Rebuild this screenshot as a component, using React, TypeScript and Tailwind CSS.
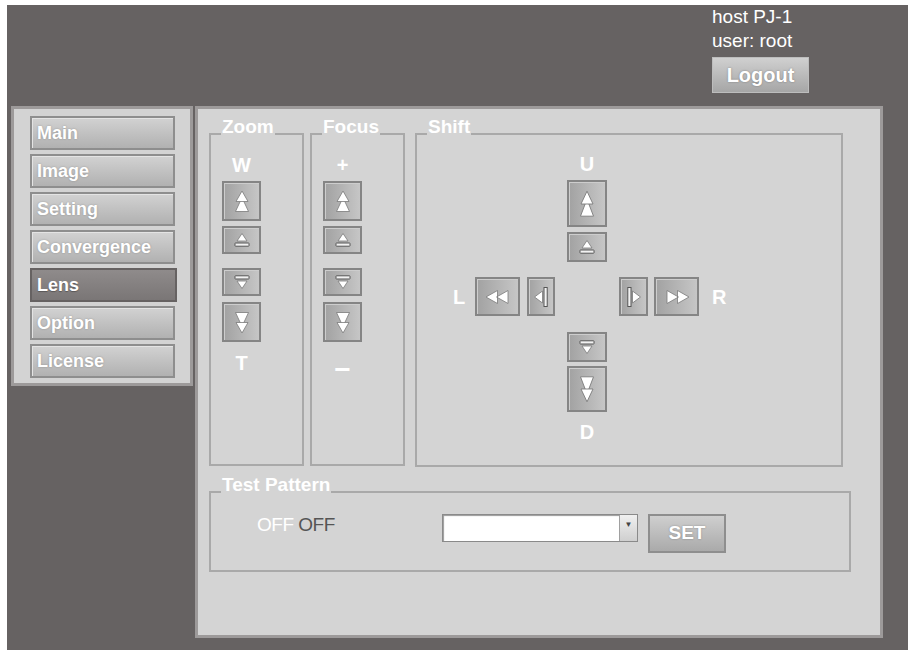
import React from "react";

const EDGE = "#7a7a7a";

function DoubleUp({ tall = false }: { tall?: boolean }) {
  return (
    <svg width="16" height={tall ? 28 : 23} viewBox="0 0 16 23" preserveAspectRatio="none">
      <path d="M8 7.5 L14.5 21.5 L1.5 21.5 Z" fill="#fff" stroke={EDGE} strokeWidth="0.8" strokeLinejoin="round" />
      <path d="M8 1 L14 11.5 L2 11.5 Z" fill="#fff" stroke={EDGE} strokeWidth="0.8" strokeLinejoin="round" />
    </svg>
  );
}

function BarUp() {
  return (
    <svg width="18" height="16" viewBox="0 0 18 16">
      <path d="M9 1.5 L14 9 L4 9 Z" fill="#fff" stroke={EDGE} strokeWidth="0.8" strokeLinejoin="round" />
      <rect x="2" y="11" width="14" height="3.2" rx="0.5" fill="#f2f2f2" stroke="#555" strokeWidth="1" />
    </svg>
  );
}

function Flip({ children }: { children: React.ReactNode }) {
  return <span className="flex rotate-180">{children}</span>;
}

function Rewind() {
  return (
    <svg width="26" height="16" viewBox="0 0 26 16">
      <path d="M1 8 L12.5 1.5 L12.5 14.5 Z M11.5 8 L23 1.5 L23 14.5 Z" fill="#fff" stroke={EDGE} strokeWidth="0.8" strokeLinejoin="round" />
    </svg>
  );
}

function StepLeft() {
  return (
    <svg width="16" height="22" viewBox="0 0 16 22">
      <path d="M1.5 11 L9.5 5 L9.5 17 Z" fill="#fff" stroke={EDGE} strokeWidth="0.8" strokeLinejoin="round" />
      <rect x="11" y="1.5" width="3.2" height="19" fill="#f2f2f2" stroke="#555" strokeWidth="1" />
    </svg>
  );
}

function ArrowBtn({ className, children }: { className: string; children: React.ReactNode }) {
  return (
    <button
      type="button"
      className={
        "flex items-center justify-center border-2 border-[#858585] bg-linear-to-r from-[#a2a2a2] to-[#c6c6c6] shadow-[inset_1px_1px_0_#cdcdcd] " +
        className
      }
    >
      {children}
    </button>
  );
}

function Group({ title, className, children }: { title: string; className: string; children?: React.ReactNode }) {
  return (
    <div className={"relative border-2 border-[#a9a9a9] " + className}>
      <span className="absolute -top-[18px] left-[10px] px-[1px] bg-[#d4d4d4] text-white font-bold text-[19px] leading-[20px]">
        {title}
      </span>
      {children}
    </div>
  );
}

const letter = "text-white font-bold text-[20px] leading-[20px]";

function LensColumn({ top, bottom }: { top: string; bottom: string }) {
  return (
    <div className="pl-[11px] pt-[20px]">
      <div className="w-[39px] flex flex-col items-center">
        <div className={letter}>{top}</div>
        <ArrowBtn className="mt-[6px] w-[39px] h-[40px]">
          <DoubleUp />
        </ArrowBtn>
        <ArrowBtn className="mt-[5px] w-[39px] h-[28px]">
          <BarUp />
        </ArrowBtn>
        <ArrowBtn className="mt-[14px] w-[39px] h-[28px]">
          <Flip>
            <BarUp />
          </Flip>
        </ArrowBtn>
        <ArrowBtn className="mt-[6px] w-[39px] h-[40px]">
          <Flip>
            <DoubleUp />
          </Flip>
        </ArrowBtn>
        {bottom === "−" ? (
          <div className="mt-[18px] text-[28px] leading-[20px] text-white font-bold">−</div>
        ) : (
          <div className={"mt-[11px] " + letter}>{bottom}</div>
        )}
      </div>
    </div>
  );
}

function ShiftCross() {
  return (
    <div className="pl-[36px] pt-[19px]">
      <div className="ml-[114px] w-[40px] flex flex-col items-center">
        <div className={letter}>U</div>
        <ArrowBtn className="mt-[6px] w-[40px] h-[47px]">
          <DoubleUp tall />
        </ArrowBtn>
        <ArrowBtn className="mt-[5px] w-[40px] h-[30px]">
          <BarUp />
        </ArrowBtn>
      </div>
      <div className="mt-[15px] flex items-center h-[39px]">
        <div className={"w-[14px] " + letter}>L</div>
        <ArrowBtn className="ml-[8px] w-[45px] h-[39px]">
          <Rewind />
        </ArrowBtn>
        <ArrowBtn className="ml-[7px] w-[28px] h-[39px]">
          <StepLeft />
        </ArrowBtn>
        <div className="ml-[12px] w-[40px]" />
        <ArrowBtn className="ml-[12px] w-[29px] h-[39px]">
          <Flip>
            <StepLeft />
          </Flip>
        </ArrowBtn>
        <ArrowBtn className="ml-[6px] w-[45px] h-[39px]">
          <Flip>
            <Rewind />
          </Flip>
        </ArrowBtn>
        <div className={"ml-[13px] " + letter}>R</div>
      </div>
      <div className="ml-[114px] mt-[16px] w-[40px] flex flex-col items-center">
        <ArrowBtn className="w-[40px] h-[30px]">
          <Flip>
            <BarUp />
          </Flip>
        </ArrowBtn>
        <ArrowBtn className="mt-[4px] w-[40px] h-[46px]">
          <Flip>
            <DoubleUp tall />
          </Flip>
        </ArrowBtn>
        <div className={"mt-[10px] " + letter}>D</div>
      </div>
    </div>
  );
}

const menu = ["Main", "Image", "Setting", "Convergence", "Lens", "Option", "License"];

function Sidebar() {
  return (
    <div className="w-[182px] h-[280px] border-[3px] border-[#9d9a9a] bg-[#d3d3d3] pt-[7px] pl-[16px] flex flex-col gap-[4px]">
      {menu.map(item =>
        item === "Lens" ? (
          <div
            key={item}
            className="w-[147px] h-[34px] flex items-center pl-[5px] border-2 border-[#666262] bg-linear-to-b from-[#8f8b8b] to-[#7a7676] text-white font-bold text-[18px] [text-shadow:0_1px_1px_rgba(0,0,0,0.3)]"
          >
            {item}
          </div>
        ) : (
          <div
            key={item}
            className="w-[145px] h-[34px] flex items-center pl-[5px] border-2 border-[#8e8e8e] bg-linear-to-b from-[#d2d2d2] to-[#b1b1b1] shadow-[inset_1px_1px_0_#e4e4e4] text-white font-bold text-[18px] [text-shadow:0_0_2px_rgba(0,0,0,0.25)]"
          >
            {item}
          </div>
        )
      )}
    </div>
  );
}

function MainPanel() {
  return (
    <div className="w-[688px] h-[532px] border-[3px] border-[#9d9a9a] bg-[#d4d4d4] pl-[11px] pt-[24px]">
      <div className="flex items-start">
        <Group title="Zoom" className="w-[95px] h-[333px]">
          <LensColumn top="W" bottom="T" />
        </Group>
        <Group title="Focus" className="ml-[6px] w-[95px] h-[333px]">
          <LensColumn top="+" bottom="−" />
        </Group>
        <Group title="Shift" className="ml-[10px] w-[428px] h-[334px]">
          <ShiftCross />
        </Group>
      </div>
      <Group title="Test Pattern" className="mt-[24px] w-[642px] h-[81px]">
        <div className="flex items-start pl-[46px] pt-[21px]">
          <div className="w-[185px] text-[19px] leading-[22px] tracking-[-0.5px]">
            <span className="text-white">OFF</span> <span className="text-[#555]">OFF</span>
          </div>
          <div className="w-[196px] h-[28px] flex border border-[#8a8a8a] bg-white shadow-[inset_1px_1px_1px_#9a9a9a]">
            <div className="flex-1" />
            <div className="w-[18px] border-l border-[#a0a0a0] bg-linear-to-b from-[#f0f0f0] to-[#cfcfcf] flex justify-center pt-[5px] text-[8px] leading-[10px] text-[#444]">
              ▼
            </div>
          </div>
          <button
            type="button"
            className="ml-[10px] w-[78px] h-[39px] border-2 border-[#8e8e8e] bg-linear-to-b from-[#cfcfcf] to-[#aaaaaa] text-white font-bold text-[19px] [text-shadow:0_0_2px_rgba(0,0,0,0.3)]"
          >
            SET
          </button>
        </div>
      </Group>
    </div>
  );
}

export default function App() {
  return (
    <div className="w-[915px] h-[650px] bg-white pt-[5px] px-[7px] font-['Liberation_Sans',Arial,sans-serif]">
      <div className="h-[645px] bg-[#666262] flex flex-col">
        <div className="h-[101px] pl-[705px] text-white text-[19px] leading-[24px]">
          <div>host PJ-1</div>
          <div>user: root</div>
          <button
            type="button"
            className="mt-[4px] w-[97px] h-[36px] border border-[#bdbdbd] bg-linear-to-b from-[#d0d0d0] to-[#a6a6a6] text-white font-bold text-[20px] [text-shadow:0_0_2px_rgba(0,0,0,0.35)]"
          >
            Logout
          </button>
        </div>
        <div className="flex items-start pl-[4px] gap-[2px]">
          <Sidebar />
          <MainPanel />
        </div>
      </div>
    </div>
  );
}
